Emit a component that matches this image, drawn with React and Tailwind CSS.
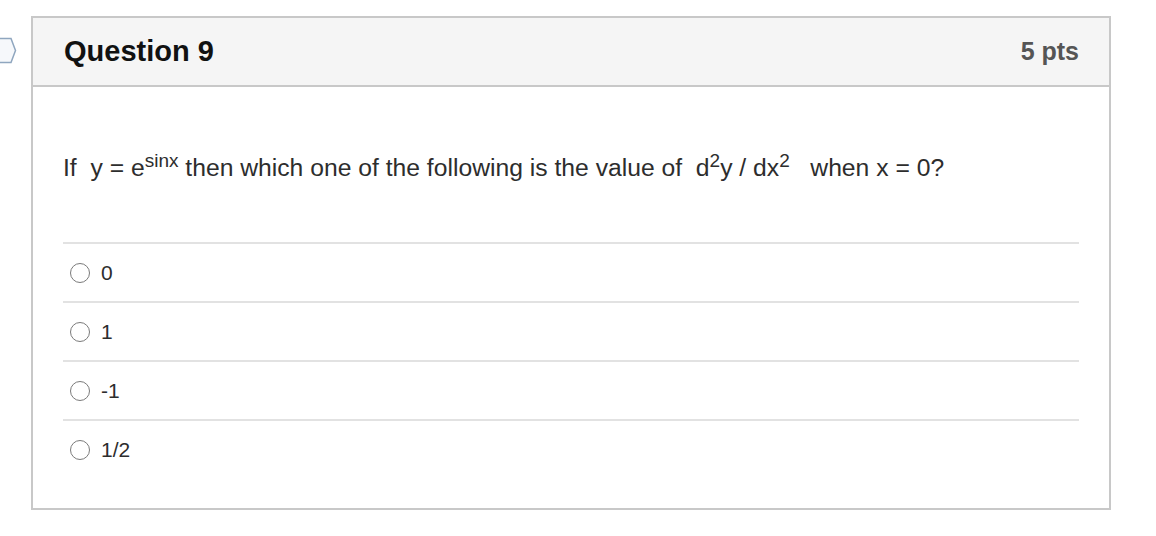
import React from 'react';

const answers = ['0', '1', '-1', '1/2'];

const App = () => {
  return (
    <div className="min-h-[536px] w-[1156px] bg-white pt-[16px] font-['Liberation_Sans',Arial,sans-serif]">
      <div className="flex">
        <div className="w-[31px] shrink-0 pt-[21px]">
          <svg width="17" height="27" viewBox="0 0 17 27">
            <path d="M-4 1.5 H11 L15.5 13.5 L11 25.5 H-4 Z" fill="#f6f8fb" stroke="#8fa6bf" strokeWidth="1.5" />
          </svg>
        </div>

        <div className="w-[1080px] border-2 border-[#c8c8c8]">
          <div className="flex h-[69px] items-center justify-between border-b-2 border-[#c8c8c8] bg-[#f5f5f5] pl-[31px] pr-[30px]">
            <h2 className="text-[29px] font-bold text-[#111]">Question 9</h2>
            <span className="text-[25px] font-bold text-[#555]">5 pts</span>
          </div>

          <div className="px-[30px] pb-[30px] pt-[66px]">
            <p className="text-[24.7px] leading-[29px] text-[#2d2d2d]">
              If&nbsp; y = e<sup className="text-[19px]">sinx</sup> then which one of the following is the value of&nbsp; d
              <sup className="text-[19px]">2</sup>y / dx<sup className="text-[19px]">2</sup>&nbsp;&nbsp; when x = 0?
            </p>

            <div className="mt-[60px]">
              {answers.map((a) => (
                <label
                  key={a}
                  className="flex h-[59px] items-center gap-[11px] border-t-2 border-[#e2e2e2] pl-[7px] text-[21px] text-[#2d2d2d]"
                >
                  <span className="h-[20px] w-[20px] rounded-full border-[1.5px] border-[#7a7a7a] bg-white"></span>
                  <span>{a}</span>
                </label>
              ))}
            </div>
          </div>
        </div>
      </div>
    </div>
  );
};

export default App;
